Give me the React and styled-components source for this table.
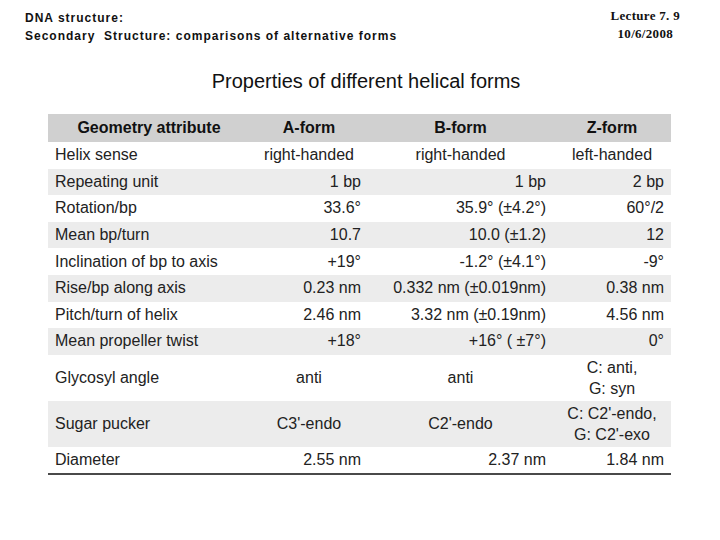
import styled, { createGlobalStyle } from "styled-components";

const GlobalStyle = createGlobalStyle`
  html, body {
    margin: 0;
    padding: 0;
    background: #ffffff;
  }
  body {
    font-family: "Liberation Sans", Arial, sans-serif;
    color: #222;
  }
`;

const columns = ["Geometry attribute", "A-form", "B-form", "Z-form"];

// align: how the three value cells sit; tall rows hold two-line text
const rows = [
  { label: "Helix sense", values: ["right-handed", "right-handed", "left-handed"], align: "center" },
  { label: "Repeating unit", values: ["1 bp", "1 bp", "2 bp"] },
  { label: "Rotation/bp", values: ["33.6°", "35.9° (±4.2°)", "60°/2"] },
  { label: "Mean bp/turn", values: ["10.7", "10.0 (±1.2)", "12"] },
  { label: "Inclination of bp to axis", values: ["+19°", "-1.2° (±4.1°)", "-9°"] },
  { label: "Rise/bp along axis", values: ["0.23 nm", "0.332 nm (±0.019nm)", "0.38 nm"] },
  { label: "Pitch/turn of helix", values: ["2.46 nm", "3.32 nm (±0.19nm)", "4.56 nm"] },
  { label: "Mean propeller twist", values: ["+18°", "+16° ( ±7°)", "0°"] },
  { label: "Glycosyl angle", values: ["anti", "anti", ["C: anti,", "G: syn"]], align: "center", tall: true },
  { label: "Sugar pucker", values: ["C3'-endo", "C2'-endo", ["C: C2'-endo,", "G: C2'-exo"]], align: "center", tall: true },
  { label: "Diameter", values: ["2.55 nm", "2.37 nm", "1.84 nm"] },
];

const App = () => {
  return (
    <Page>
      <GlobalStyle />
      <TopBar>
        <Breadcrumb>
          <div>DNA structure:</div>
          <div>Secondary&nbsp; Structure: comparisons of alternative forms</div>
        </Breadcrumb>
        <LectureTag>
          <div>Lecture 7. 9</div>
          <div>10/6/2008</div>
        </LectureTag>
      </TopBar>

      <Title>Properties of different helical forms</Title>

      <Table>
        <HeadRow>
          {columns.map((col) => (
            <HeadCell key={col}>{col}</HeadCell>
          ))}
        </HeadRow>

        {rows.map((row, i) => (
          <Row key={row.label} $shaded={i % 2 === 1} $tall={row.tall}>
            <LabelCell>{row.label}</LabelCell>
            {row.values.map((value, j) => (
              <ValueCell key={j} $align={row.align || "right"}>
                {Array.isArray(value) ? (
                  <Stack>
                    {value.map((line) => (
                      <span key={line}>{line}</span>
                    ))}
                  </Stack>
                ) : (
                  value
                )}
              </ValueCell>
            ))}
          </Row>
        ))}
      </Table>
    </Page>
  );
};

const Page = styled.div`
  width: 720px;
  height: 540px;
  overflow: hidden;
  display: flex;
  flex-direction: column;
`;

const TopBar = styled.div`
  display: flex;
  justify-content: space-between;
  align-items: flex-start;
  padding: 9px 40px 0 25px;
`;

const Breadcrumb = styled.div`
  font-size: 12px;
  font-weight: bold;
  line-height: 18px;
  letter-spacing: 1px;
  color: #111;
`;

const LectureTag = styled.div`
  margin-top: -2px;
  font-family: "Liberation Serif", "Times New Roman", serif;
  font-weight: bold;
  font-size: 13px;
  line-height: 18px;
  letter-spacing: 0.3px;
  text-align: center;
  color: #111;
`;

const Title = styled.div`
  margin-top: 24px;
  padding-left: 12px;
  font-size: 20px;
  line-height: 24px;
  text-align: center;
  color: #111;
`;

const Table = styled.div`
  margin: 21px 0 0 48px;
  width: 623px;
  border-bottom: 2px solid #4a4a4a;
`;

const grid = `
  display: grid;
  grid-template-columns: 202px 118px 185px 118px;
`;

const HeadRow = styled.div`
  ${grid}
  height: 28px;
  background: #d0d0d0;
`;

const HeadCell = styled.div`
  display: flex;
  align-items: center;
  justify-content: center;
  font-size: 16px;
  font-weight: bold;
  color: #111;
`;

const Row = styled.div`
  ${grid}
  height: ${({ $tall }) => ($tall ? "46px" : "26.6px")};
  background: ${({ $shaded }) => ($shaded ? "#ececec" : "#ffffff")};
`;

const LabelCell = styled.div`
  display: flex;
  align-items: center;
  padding-left: 7px;
  font-size: 16px;
  white-space: nowrap;
`;

const ValueCell = styled.div`
  display: flex;
  align-items: center;
  justify-content: ${({ $align }) => ($align === "center" ? "center" : "flex-end")};
  padding-right: ${({ $align }) => ($align === "center" ? "0" : "7px")};
  font-size: 16px;
  white-space: nowrap;
  text-align: center;
`;

const Stack = styled.div`
  display: flex;
  flex-direction: column;
  align-items: center;
  line-height: 21px;
`;

export default App;
